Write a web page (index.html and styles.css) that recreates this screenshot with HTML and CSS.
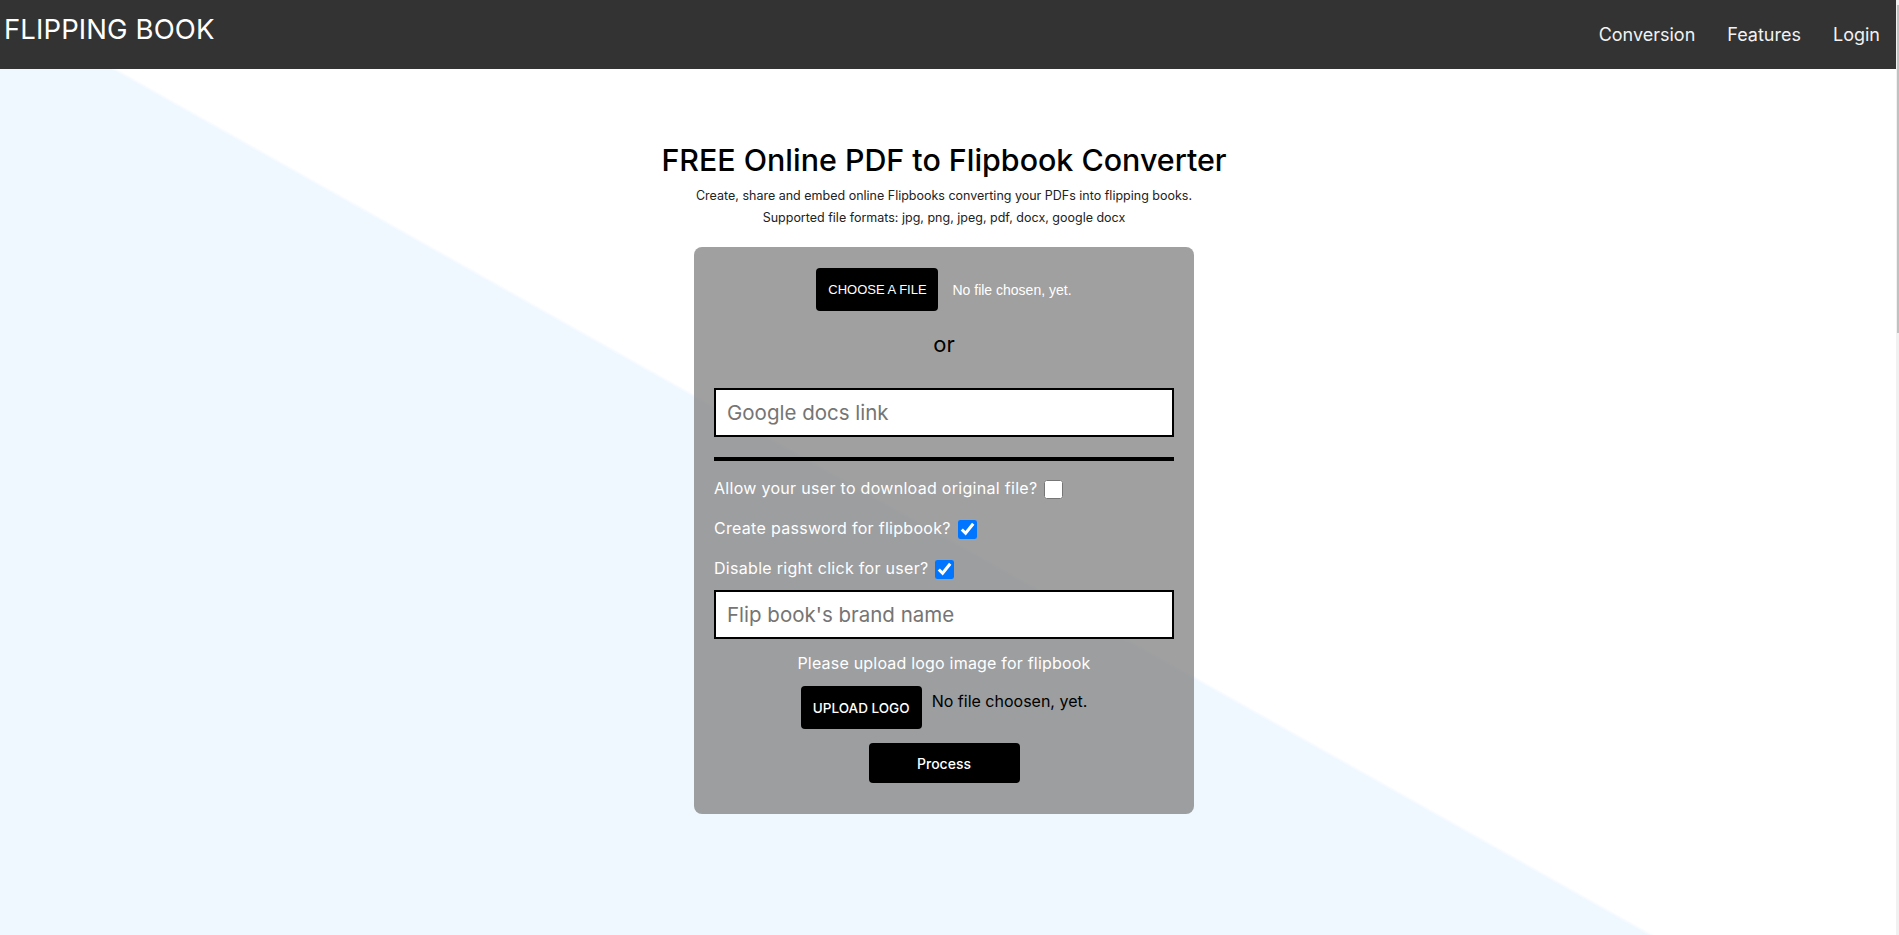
FILE: index.html
```html
<!DOCTYPE html>
<html lang="en">
<head>
<meta charset="utf-8">
<title>Flipping Book</title>
<link rel="stylesheet" href="styles.css">
</head>
<body>
<div class="page">
  <header class="topbar">
    <div class="brand">FLIPPING BOOK</div>
    <nav class="nav">
      <a href="#">Conversion</a>
      <a href="#">Features</a>
      <a href="#">Login</a>
    </nav>
  </header>
  <main class="hero">
    <h1 class="title">FREE Online PDF to Flipbook Converter</h1>
    <p class="subtitle">Create, share and embed online Flipbooks converting your PDFs into flipping books.<br>Supported file formats: jpg, png, jpeg, pdf, docx, google docx</p>
    <form class="card">
      <div class="file-row">
        <label class="btn btn-file">CHOOSE A FILE</label>
        <span class="file-name">No file chosen, yet.</span>
      </div>
      <div class="or">or</div>
      <input class="field" type="text" placeholder="Google docs link">
      <hr class="divider">
      <label class="check-row">Allow your user to download original file? <input type="checkbox"></label>
      <label class="check-row">Create password for flipbook? <input type="checkbox" checked></label>
      <label class="check-row">Disable right click for user? <input type="checkbox" checked></label>
      <input class="field field-brand" type="text" placeholder="Flip book's brand name">
      <p class="upload-label">Please upload logo image for flipbook</p>
      <div class="logo-row">
        <label class="btn btn-logo">UPLOAD LOGO</label>
        <span class="logo-name">No file choosen, yet.</span>
      </div>
      <button type="button" class="btn btn-process">Process</button>
    </form>
  </main>
</div>
<div class="scrollbar" aria-hidden="true"><div class="scrollbar-thumb"></div></div>
</body>
</html>
```

FILE: styles.css
```css
* { box-sizing: border-box; }

html, body {
  margin: 0;
  padding: 0;
}

body {
  font-family: "Inter", "Open Sans", sans-serif;
  background: #ffffff;
  color: #000;
  display: flex;
  min-height: 935px;
}

.page {
  flex: 1;
  min-width: 0;
}

.scrollbar {
  width: 3px;
  background: #f1f1f1;
  padding-top: 5px;
}

.scrollbar-thumb {
  width: 2px;
  margin-left: 1px;
  height: 328px;
  background: #c1c1c1;
}

.topbar {
  height: 69px;
  background: #333333;
  display: flex;
  justify-content: space-between;
  align-items: flex-start;
}

.brand {
  color: #ffffff;
  font-size: 27.5px;
  font-weight: 400;
  line-height: 36px;
  padding: 11px 0 0 4px;
  letter-spacing: 0.1px;
}

.nav {
  display: flex;
  gap: 32px;
  padding: 23px 16px 0 0;
}

.nav a {
  color: #f2f2f2;
  text-decoration: none;
  font-size: 18px;
  line-height: 24px;
}

.hero {
  min-height: 866px;
  background: linear-gradient(29.4deg, #f0f8ff 48%, #ffffff 48.2%);
  display: flex;
  flex-direction: column;
  align-items: center;
  padding: 71px 8px 0 0;
}

.title {
  margin: 0;
  font-size: 30.4px;
  font-weight: 500;
  line-height: 40px;
  color: #000;
}

.subtitle {
  margin: 5px 0 0;
  font-size: 12.5px;
  line-height: 22px;
  text-align: center;
  color: #222;
}

.card {
  margin-top: 18px;
  width: 500px;
  background: rgba(128, 128, 128, 0.75);
  border-radius: 8px;
  padding: 21px 20px 31px;
  display: flex;
  flex-direction: column;
  align-items: stretch;
}

.btn {
  background: #000;
  color: #fff;
  border: none;
  border-radius: 4px;
  display: flex;
  align-items: center;
  justify-content: center;
  cursor: pointer;
}

.file-row {
  display: flex;
  justify-content: center;
  align-items: center;
  gap: 14px;
  height: 43px;
}

.btn-file {
  width: 122px;
  height: 43px;
  font-family: "Liberation Sans", Arial, sans-serif;
  font-size: 13px;
}

.file-name {
  font-family: "Liberation Sans", Arial, sans-serif;
  font-size: 14px;
  color: #fff;
}

.or {
  margin-top: 17px;
  text-align: center;
  font-size: 22px;
  line-height: 32px;
  color: #000;
}

.field {
  display: block;
  width: 100%;
  height: 49px;
  margin-top: 28px;
  border: 2.5px solid #000;
  background: #fff;
  padding: 0 11px;
  font-family: inherit;
  font-size: 20.5px;
  color: #000;
  outline: none;
}

.field::placeholder {
  color: #757575;
}

.divider {
  margin: 20px 0 0;
  border: none;
  height: 4px;
  background: #000;
}

.check-row {
  display: block;
  height: 24px;
  margin-top: 15px;
  font-size: 16px;
  letter-spacing: 0.3px;
  line-height: 24px;
  color: #fff;
}

.check-row + .check-row {
  margin-top: 16px;
}

.check-row input {
  width: 19px;
  height: 19px;
  margin: 0 0 0 2px;
  vertical-align: -5px;
}

.field-brand {
  margin-top: 10px;
}

.upload-label {
  margin: 12px 0 0;
  text-align: center;
  font-size: 16px;
  letter-spacing: 0.2px;
  line-height: 24px;
  color: #fff;
}

.logo-row {
  margin-top: 11px;
  display: flex;
  justify-content: center;
  align-items: flex-start;
  gap: 10px;
}

.btn-logo {
  width: 121px;
  height: 43px;
  font-size: 13.5px;
  font-weight: 500;
}

.logo-name {
  padding-top: 3px;
  font-size: 16px;
  line-height: 24px;
  color: #000;
}

.btn-process {
  align-self: center;
  margin-top: 14px;
  width: 151px;
  height: 40px;
  font-family: inherit;
  font-size: 14px;
  font-weight: 500;
}
```
